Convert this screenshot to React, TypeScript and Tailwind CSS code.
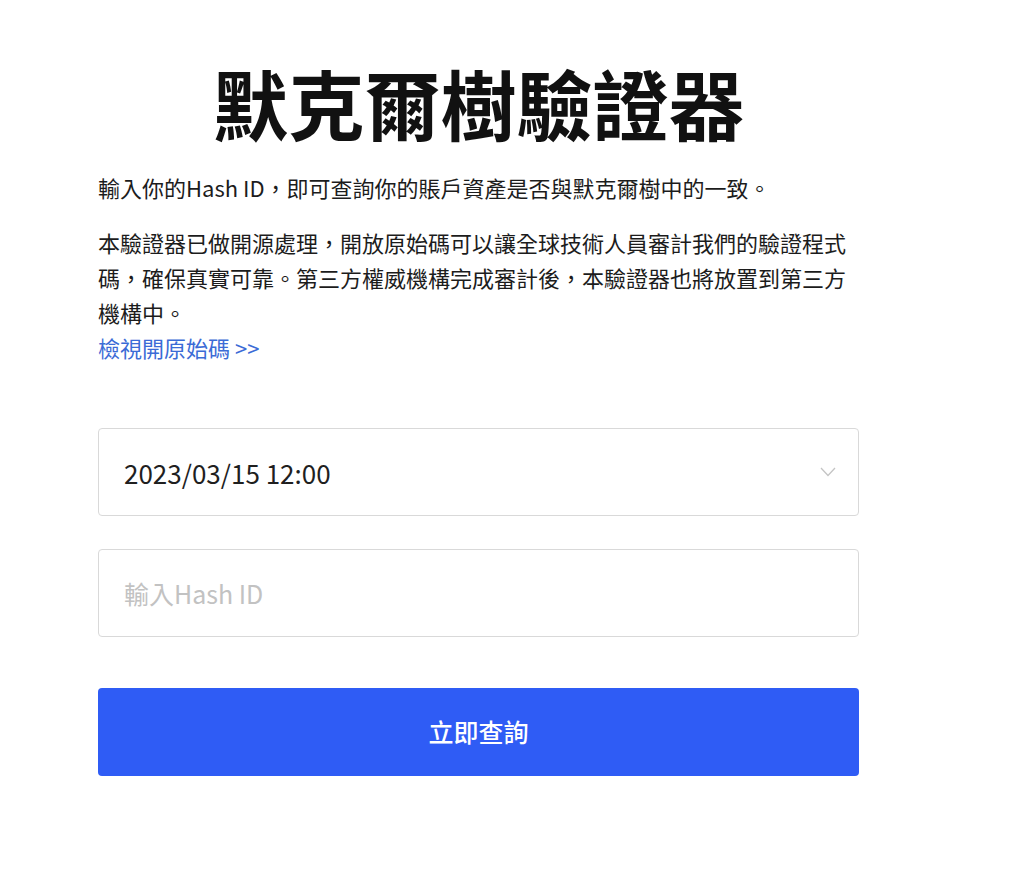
import * as React from "react";

const cjk = "font-['Noto_Sans_CJK_TC','Noto_Sans_CJK_SC',sans-serif]";

export default function App() {
  return (
    <div className={`min-h-screen w-full bg-white ${cjk}`}>
      <div className="ml-[98px] w-[761px] pt-[64px]">
        <Header />
        <Intro />
        <VerifyForm />
      </div>
    </div>
  );
}

function Header() {
  return (
    <h1 className="text-center text-[76px] leading-none font-bold text-[#111111]">
      默克爾樹驗證器
    </h1>
  );
}

function Intro() {
  return (
    <div className="mt-[30px] text-[22px] leading-[35px] text-[#1c1c1c]">
      <p>輸入你的Hash ID，即可查詢你的賬戶資產是否與默克爾樹中的一致。</p>
      <p className="mt-[20px]">
        本驗證器已做開源處理，開放原始碼可以讓全球技術人員審計我們的驗證程式碼，確保真實可靠。第三方權威機構完成審計後，本驗證器也將放置到第三方機構中。
      </p>
      <a href="#" className="block text-[#3b6bd6]">
        檢視開原始碼 &gt;&gt;
      </a>
    </div>
  );
}

function VerifyForm() {
  return (
    <div className="mt-[63px] flex flex-col">
      <button className="flex h-[88px] w-full items-center justify-between rounded-[4px] border border-[#d9d9d9] pl-[25px] pr-[22px] text-left">
        <span className="text-[26px] text-[#1f1f1f]">2023/03/15 12:00</span>
        <svg width="16" height="10" viewBox="0 0 16 10" fill="none">
          <polyline
            points="1,1 8,8.5 15,1"
            stroke="#c4c4c4"
            strokeWidth="1.3"
          />
        </svg>
      </button>
      <input
        className="mt-[33px] h-[88px] w-full rounded-[4px] border border-[#d9d9d9] pl-[25px] text-[25px] outline-none placeholder:text-[#c2c2c2]"
        placeholder="輸入Hash ID"
      />
      <button className="mt-[51px] h-[88px] w-full rounded-[4px] bg-[#2f5cf5] text-[25px] font-medium text-white">
        立即查詢
      </button>
    </div>
  );
}
